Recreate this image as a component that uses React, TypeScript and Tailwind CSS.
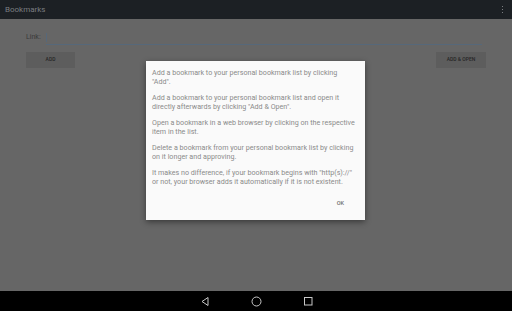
import React from 'react';

const paragraphs = [
  ['Add a bookmark to your personal bookmark list by clicking', '"Add".'],
  ['Add a bookmark to your personal bookmark list and open it', 'directly afterwards by clicking "Add & Open".'],
  ['Open a bookmark in a web browser by clicking on the respective', 'item in the list.'],
  ['Delete a bookmark from your personal bookmark list by clicking', 'on it longer and approving.'],
  ['It makes no difference, if your bookmark begins with "http(s)://"', 'or not, your browser adds it automatically if it is not existent.'],
];

export default function App() {
  return (
    <div className="w-[512px] h-[311px] flex flex-col bg-[#666666] overflow-hidden font-['Roboto',sans-serif]">
      {/* App bar */}
      <div className="h-[19px] bg-[#1c2024] flex items-center justify-between pl-[5px] pr-[9px] shrink-0">
        <span className="text-[8px] text-[#7a7d80]">Bookmarks</span>
        <div className="flex flex-col gap-[1.5px]">
          <span className="w-[1.5px] h-[1.5px] bg-[#7a7d80]" />
          <span className="w-[1.5px] h-[1.5px] bg-[#7a7d80]" />
          <span className="w-[1.5px] h-[1.5px] bg-[#7a7d80]" />
        </div>
      </div>

      {/* Content */}
      <div className="relative flex-1 px-[26px] pt-[13px]">
        <div className="flex items-end h-[13px]">
          <span className="text-[7px] leading-[9px] text-[#3a3a3a] mr-[5px] mb-[3px]">Link:</span>
          <div className="flex-1 h-full flex flex-col mr-[4px]">
            <div className="flex-1 pt-[1px]">
              <div className="w-px h-[9px] bg-[#56687a]" />
            </div>
            <div className="h-px bg-[#56687a]" />
          </div>
        </div>
        <div className="flex justify-between mt-[7px]">
          <div className="w-[49px] h-[16px] bg-[#5d5d5d] flex items-center justify-center text-[5px] text-[#262626] font-medium">ADD</div>
          <div className="w-[50px] h-[16px] bg-[#5d5d5d] flex items-center justify-center text-[5px] text-[#262626] font-medium">ADD &amp; OPEN</div>
        </div>

        {/* Dialog */}
        <div className="absolute left-[146px] top-[42px] w-[219px] h-[159px] bg-[#fafafa] shadow-[0_2px_6px_rgba(0,0,0,0.45)] px-[6px] pt-[7px]">
          <div className="flex flex-col gap-[7px]">
            {paragraphs.map((p, i) => (
              <p key={i} className="text-[7.15px] leading-[9px] text-[#8a8a8a] whitespace-nowrap">
                {p[0]}
                <br />
                {p[1]}
              </p>
            ))}
          </div>
          <div className="flex justify-end pr-[15px] mt-[13px]">
            <span className="text-[5.5px] font-medium text-[#707070]">OK</span>
          </div>
        </div>
      </div>

      {/* Nav bar */}
      <div className="h-[20px] bg-black flex items-center justify-center gap-[41px] shrink-0">
        <svg width="10" height="11" viewBox="0 0 10 11" fill="none" stroke="#c8c8c8" strokeWidth="1">
          <path d="M8 1.5 L2 5.5 L8 9.5 Z" />
        </svg>
        <svg width="11" height="11" viewBox="0 0 11 11" fill="none" stroke="#c8c8c8" strokeWidth="1">
          <circle cx="5.5" cy="5.5" r="4.5" />
        </svg>
        <svg width="10" height="10" viewBox="0 0 10 10" fill="none" stroke="#c8c8c8" strokeWidth="1">
          <rect x="1.5" y="1.5" width="7.5" height="7.5" />
        </svg>
      </div>
    </div>
  );
}
